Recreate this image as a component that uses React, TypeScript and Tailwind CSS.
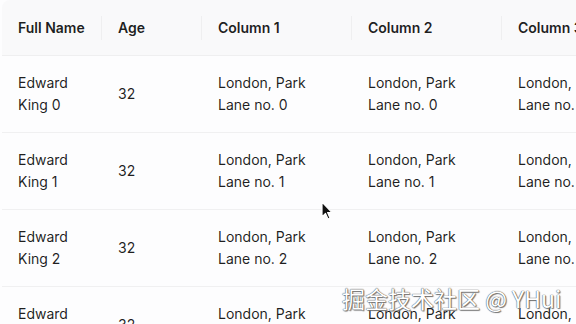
import React from "react";

const rows = [0, 1, 2, 3];
const cols = ["Column 1", "Column 2", "Column 3"];

export default function App() {
  return (
    <div className="relative w-[576px] h-[324px] overflow-hidden bg-[#fdfdfe] font-['Inter','Noto_Sans',sans-serif] text-[14px] text-[rgba(0,0,0,0.88)]">
      <div className="ml-[2px] w-[800px]">
        <div className="flex h-[56px] bg-[#f9f9fa] border-b border-[#efeff0] rounded-t-[8px] font-semibold">
          <div className="relative flex items-center w-[100px] px-[16px]">
            Full Name
            <span className="absolute right-0 top-[16px] h-[24px] w-px bg-[#efeff0]" />
          </div>
          <div className="relative flex items-center w-[100px] px-[16px]">
            Age
            <span className="absolute right-0 top-[16px] h-[24px] w-px bg-[#efeff0]" />
          </div>
          {cols.map((c) => (
            <div key={c} className="relative flex items-center w-[150px] px-[16px]">
              {c}
              <span className="absolute right-0 top-[16px] h-[24px] w-px bg-[#efeff0]" />
            </div>
          ))}
        </div>
        {rows.map((i) => (
          <div key={i} className="flex h-[77px] border-b border-[#f0f0f1] leading-[22px]">
            <div className="flex items-center w-[100px] px-[16px]">
              <span>
                Edward
                <br />
                King {i}
              </span>
            </div>
            <div className="flex items-center w-[100px] px-[16px]">32</div>
            {cols.map((c) => (
              <div key={c} className="flex items-center w-[150px] px-[16px]">
                <span>
                  London, Park
                  <br />
                  Lane no. {i}
                </span>
              </div>
            ))}
          </div>
        ))}
      </div>
      <svg
        className="absolute left-[320px] top-[201px]"
        width="14"
        height="20"
        viewBox="0 0 14 20"
      >
        <path
          d="M2 1 L2 16 L5.5 12.5 L8 18 L10 17 L7.6 11.6 L12 11.6 Z"
          fill="#111"
          stroke="#fff"
          strokeWidth="1.2"
          strokeLinejoin="round"
        />
      </svg>
      <div className="absolute left-[342px] top-[283px] text-[23px] leading-[30px] text-white font-['Noto_Sans_CJK_SC',sans-serif] [text-shadow:0_0_1px_#555,0_0_1px_#555,1px_1px_1px_#777] whitespace-nowrap">
        掘金技术社区 @ YHui
      </div>
    </div>
  );
}
